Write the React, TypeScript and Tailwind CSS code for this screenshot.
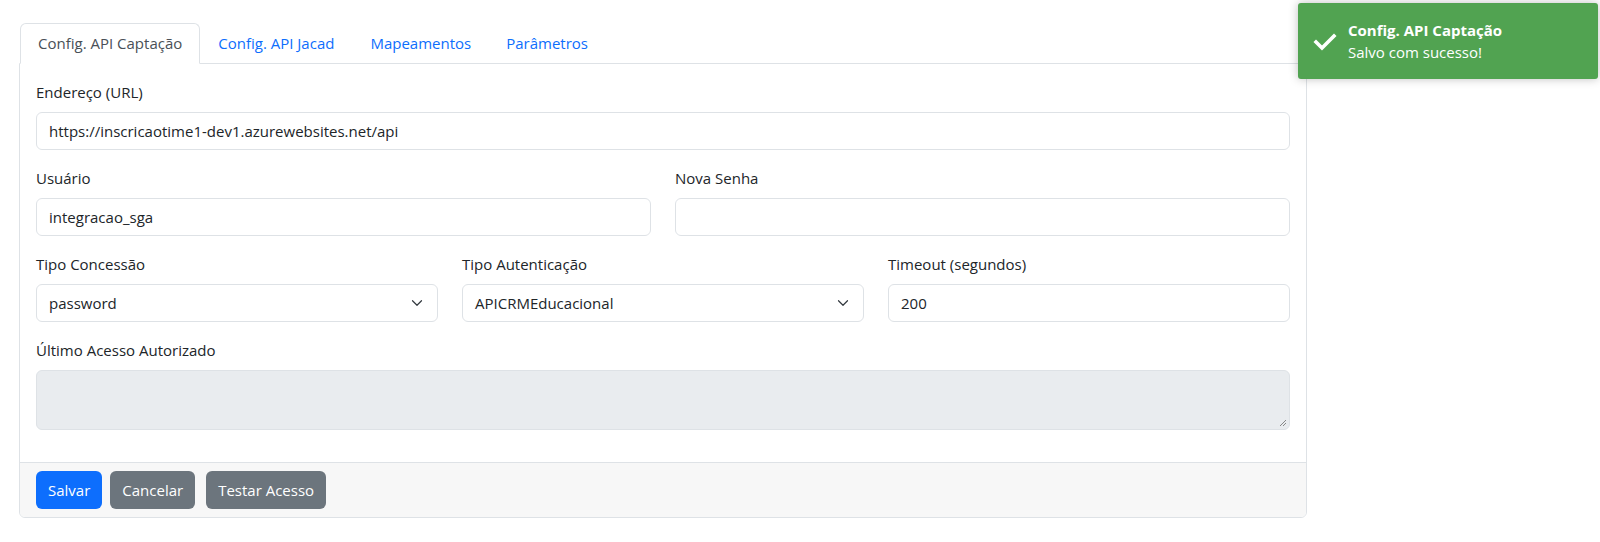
import React from "react";

const font = { fontFamily: '"Open Sans", "Noto Sans", Arial, sans-serif' };

function Chevron() {
  return (
    <svg width="16" height="12" viewBox="0 0 16 16" className="absolute right-3 top-1/2 -translate-y-1/2 pointer-events-none">
      <path d="m2 5 6 6 6-6" fill="none" stroke="#343a40" strokeWidth="1.6" strokeLinecap="round" strokeLinejoin="round" />
    </svg>
  );
}

function Label({ children }: { children: React.ReactNode }) {
  return <label className="block leading-6 mb-2 text-[#212529]">{children}</label>;
}

function Input({ value }: { value?: string }) {
  return (
    <div className="h-[38px] w-full border border-[#dee2e6] rounded-[6px] bg-white px-3 flex items-center text-[#212529]">
      {value}
    </div>
  );
}

function Select({ value }: { value: string }) {
  return (
    <div className="relative h-[38px] w-full border border-[#dee2e6] rounded-[6px] bg-white pl-3 pr-9 flex items-center text-[#212529]">
      {value}
      <Chevron />
    </div>
  );
}

export default function App() {
  return (
    <div className="relative w-[1600px] h-[542px] bg-white text-[15px] text-[#212529]" style={font}>
      <div className="pt-[23px] pl-[19px] w-[1307px]">
        <div className="flex">
          <div className="px-[17px] h-[41px] flex items-center border border-[#dee2e6] border-b-white rounded-t-[6px] bg-white text-[#495057] ml-px -mb-px relative z-10">
            Config. API Captação
          </div>
          <div className="px-[18px] h-10 flex items-center text-[#0d6efd]">Config. API Jacad</div>
          <div className="px-[18px] h-10 flex items-center text-[#0d6efd]">Mapeamentos</div>
          <div className="px-[17px] h-10 flex items-center text-[#0d6efd]">Parâmetros</div>
        </div>
        <div className="border border-[#dee2e6] rounded-b-[6px] rounded-tr-[6px] overflow-hidden">
          <div className="p-4">
            <div className="mb-4">
              <Label>Endereço (URL)</Label>
              <Input value="https://inscricaotime1-dev1.azurewebsites.net/api" />
            </div>
            <div className="grid grid-cols-2 gap-x-6 mb-4">
              <div>
                <Label>Usuário</Label>
                <Input value="integracao_sga" />
              </div>
              <div>
                <Label>Nova Senha</Label>
                <Input />
              </div>
            </div>
            <div className="grid grid-cols-3 gap-x-6 mb-4">
              <div>
                <Label>Tipo Concessão</Label>
                <Select value="password" />
              </div>
              <div>
                <Label>Tipo Autenticação</Label>
                <Select value="APICRMEducacional" />
              </div>
              <div>
                <Label>Timeout (segundos)</Label>
                <Input value="200" />
              </div>
            </div>
            <div className="mb-4">
              <Label>Último Acesso Autorizado</Label>
              <div className="relative h-[60px] w-full border border-[#dee2e6] rounded-[6px] bg-[#e9ecef]">
                <svg width="10" height="10" viewBox="0 0 10 10" className="absolute right-[2px] bottom-[2px]">
                  <path d="M9 3 L3 9 M9 6 L6 9" stroke="#888" strokeWidth="1" />
                </svg>
              </div>
            </div>
          </div>
          <div className="border-t border-[#dee2e6] bg-[#f7f7f7] px-4 py-2 flex items-center">
            <button className="h-[38px] px-3 rounded-[6px] bg-[#0d6efd] text-white mr-2">Salvar</button>
            <button className="h-[38px] px-3 rounded-[6px] bg-[#6c757d] text-white mr-[11px]">Cancelar</button>
            <button className="h-[38px] px-3 rounded-[6px] bg-[#6c757d] text-white">Testar Acesso</button>
          </div>
        </div>
      </div>

      <div className="absolute top-[3px] left-[1298px] w-[300px] h-[76px] rounded-[3px] bg-[#51a351] text-white shadow-[0_0_10px_rgba(0,0,0,0.25)] flex items-center pl-[50px]">
        <svg width="24" height="20" viewBox="0 0 24 20" className="absolute left-[15px] top-[29px]">
          <path d="M3 10 L9 16 L21 4" fill="none" stroke="white" strokeWidth="3.6" strokeLinecap="square" />
        </svg>
        <div className="leading-[22px]">
          <div className="font-bold">Config. API Captação</div>
          <div>Salvo com sucesso!</div>
        </div>
      </div>
    </div>
  );
}
